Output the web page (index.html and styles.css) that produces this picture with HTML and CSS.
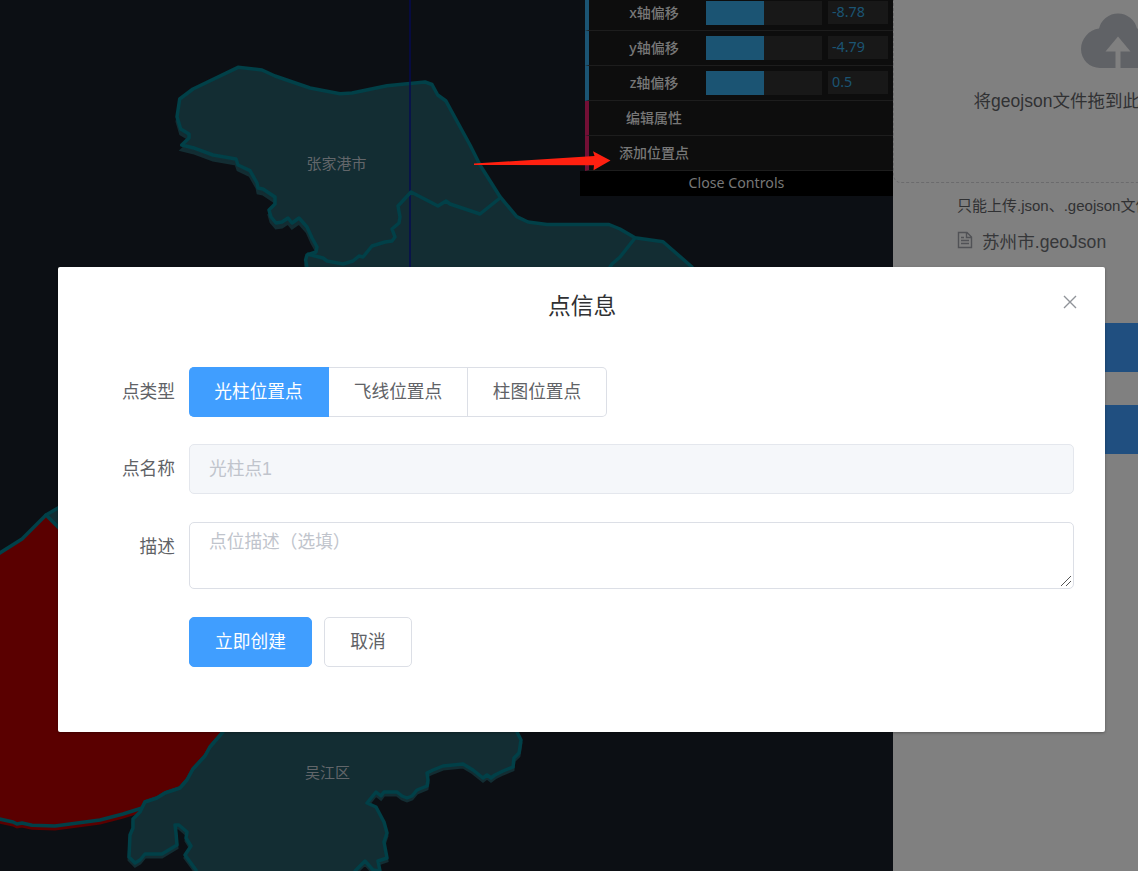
FILE: index.html
```html
<!DOCTYPE html>
<html lang="zh-CN">
<head>
<meta charset="utf-8">
<title>点信息</title>
<link rel="stylesheet" href="styles.css">
</head>
<body>
<div class="app">
  <main class="scene">
    <svg class="map" width="893" height="871" viewBox="0 0 893 871">
      <defs>
        <path id="north" d="M179.7 99L193 89L238 67.3L262 70L275 76L310 88L340 93.7L352 93L387 85.7L425 82L432 84.5L437.7 95L445.7 100.7L470 145L480 165L500 196.7L516.7 216.7L528 222L547 224.5H609L620 229L635 237.7L663 241.7L692 267V300H307V267L305.6 260L307 255L316 252L317 247L312 238L307 227L299 218L292 223L288 218L282 222L276 223L271 217L269 210L275 204V197L263 189L258 188L257 183L250 170.7L238 165L236 159L213 155L193 147.7L181.7 145L189 138V134L180.7 129L177 116.7Z"/>
        <path id="south" d="M223 732L210 747L205 756L193 769L187 780L180 788L165 793L157 798L145 802L140 812L133 819V828L130 835L129 857L135 863L140 860L145 854H162L177 845L176 833L175 825L179 825L187 832L186 838L191 846L185 855L196 870V890H355V871L365 861L373 870L380 871L378 861L387 858L384 842L387 833L384 822L376 807L367 803L376 792L381 796L384 792H397L402 796L407 798L412 796L417 790L427 786L428 780L427 773L433 770L443 766L463 764L473 770L483 778L487 775L491 778L495 775L503 771L513 767L514 758L519 753L521 740L516 730V700H223Z"/>
        <path id="lake" d="M-5 556L22 539L46 515L58 527L90 560V700H240L223 732L210 747L205 756L193 769L187 780L180 788L165 793L157 798L145 802L142 808L123 814L100 820L70 824L55 826L32 825.3L22 823L17 824L13 822L-5 818Z"/>
      </defs>
      <use href="#north" y="5" class="side"/>
      <use href="#lake" y="3" class="lake-side"/>
      <use href="#south" y="3" class="side"/>
      <path class="land" d="M46 515L58 508L80 500V550Z"/>
      <use href="#lake" class="lake"/>
      <use href="#north" class="land"/>
      <use href="#south" class="land"/>
      <path class="axis" d="M410 0V300"/>
      <path class="border" d="M307 254L323 258L327 261L343 264L353 261L359 256L363 257L372 246L385 242L392 241L395 237L392 229L399 223L400 217L398 206L411 192L438 206L446 201L450 204L480 214L500 198M635 238L620 257L612 264L605 275"/>
      <text class="place" x="336.500" y="168.500">张家港市</text>
      <text class="place" x="327.500" y="778">吴江区</text>
    </svg>
    <section class="gui">
      <ul class="gui-list">
        <li class="row num"><span class="name">x轴偏移</span><span class="slider"><i class="fill"></i></span><span class="value">-8.78</span></li>
        <li class="row num"><span class="name">y轴偏移</span><span class="slider"><i class="fill"></i></span><span class="value">-4.79</span></li>
        <li class="row num"><span class="name">z轴偏移</span><span class="slider"><i class="fill"></i></span><span class="value">0.5</span></li>
        <li class="row func"><span class="name">编辑属性</span></li>
        <li class="row func"><span class="name">添加位置点</span></li>
      </ul>
      <div class="gui-close">Close Controls</div>
    </section>
  </main>
  <aside class="sidebar">
    <div class="drop">
      <svg class="cloud" width="74" height="57" viewBox="0 0 74 57">
        <path class="cloud-shape" d="M19 56A19 19 0 0 1 0 37C0 27 8 17.500 18 16.500A19.500 19.500 0 0 1 56 16.500C66 17.500 74 27 74 37A19 19 0 0 1 55 56Z"/>
        <path class="cloud-arrow" d="M37 24.500L49.500 39.500H39.500V57H34.500V39.500H24.500Z"/>
      </svg>
      <div class="drop-text">将geojson文件拖到此处，或点击上传</div>
    </div>
    <div class="tip">只能上传.json、.geojson文件</div>
    <div class="file">
      <svg width="16" height="18" viewBox="0 0 16 18"><path class="doc" d="M1.500 1.500H10L14.500 6V16.500H1.500ZM9.500 1.500V6.500H14.500M4 6.500H7M4 9.500H12M4 12.500H12"/></svg>
      <span>苏州市.geoJson</span>
    </div>
    <div class="side-button"></div>
    <div class="side-button"></div>
  </aside>

  <svg class="pointer" width="138" height="22" viewBox="0 0 138 22"><path d="M0 13.500V15L120 15.200L119.500 20.300L136.500 10.500L119 1.200L120.500 6Z"/></svg>

  <section class="dialog">
    <header class="dialog-head">
      <h1 class="title">点信息</h1>
      <svg class="close" width="14" height="14" viewBox="0 0 14 14"><path d="M1 1L13 13M13 1L1 13"/></svg>
    </header>
    <form class="form">
      <div class="item">
        <label class="label">点类型</label>
        <div class="radios"><span class="radio on">光柱位置点</span><span class="radio">飞线位置点</span><span class="radio">柱图位置点</span></div>
      </div>
      <div class="item">
        <label class="label">点名称</label>
        <div class="input">光柱点1</div>
      </div>
      <div class="item area">
        <label class="label">描述</label>
        <div class="textarea"><span>点位描述（选填）</span>
          <svg class="grip" width="12" height="12" viewBox="0 0 12 12"><path d="M1 11L11 1M6 11L11 6"/></svg>
        </div>
      </div>
      <div class="actions"><button type="button" class="btn primary">立即创建</button><button type="button" class="btn">取消</button></div>
    </form>
  </section>
</div>
</body>
</html>
```
FILE: styles.css
```css
* { box-sizing: border-box; }
body { margin: 0; font-family: "Liberation Sans", "Noto Sans CJK SC", sans-serif; }
.app { position: relative; display: flex; width: 1138px; height: 871px; overflow: hidden; background: #0c0f14; }
.scene { position: relative; flex: 0 0 893px; }
.map { display: block; }
.land { fill: #132d33; stroke: #014048; stroke-width: 3.5; stroke-linejoin: round; }
.side { fill: #132d33; stroke: #132d33; stroke-width: 3; }
.lake { fill: #5a0000; stroke: #014048; stroke-width: 3.5; stroke-linejoin: round; }
.lake-side { fill: #5a0000; stroke: #5a0000; stroke-width: 3; }
.border { fill: none; stroke: #014048; stroke-width: 3.5; stroke-linejoin: round; }
.axis { stroke: #060a52; stroke-opacity: .7; stroke-width: 2; }
.place { fill: #62666a; font-size: 15px; text-anchor: middle; }

/* Parameter panel floats over the map */
.gui { position: absolute; top: 0; right: 0; width: 313px; font-family: "Noto Sans", "Noto Sans CJK SC", sans-serif; font-size: 14px; color: #777; }
.gui-list { margin: -4px 0 0 5px; padding: 0; list-style: none; }
.row { display: flex; align-items: center; height: 35px; padding-right: 5px; border-left: 4px solid #1b5473; border-bottom: 1px solid #1d1d1d; background: #0d0d0d; }
.func { border-left-color: #730f35; }
.name { width: 117px; padding-left: 13px; text-align: center; line-height: 34px; font-weight: 500; white-space: nowrap; }
.slider { width: 116px; height: 24px; background: #181818; }
.fill { display: block; width: 58px; height: 24px; background: #1b5473; }
.value { width: 60px; height: 23px; margin: 0 0 1px 6px; padding-left: 4px; font-size: 14.3px; line-height: 22px; background: #181818; color: #1b5473; }
.gui-close { height: 25px; background: #000; font-size: 14.2px; line-height: 24px; text-align: center; }

.sidebar { flex: 0 0 450px; background: #808080; color: #303133; }
.drop { height: 183px; padding-top: 12px; border: 1px dashed #6b6b6d; border-top: 0; border-radius: 0 0 8px 8px; }
.cloud { display: block; margin: 0 auto; }
.cloud-shape { fill: #606266; }
.cloud-arrow { fill: #808080; }
.drop-text { padding-top: 18px; text-align: center; font-size: 17.5px; line-height: 28px; white-space: nowrap; }
.tip { padding: 12px 0 0 64px; font-size: 15px; line-height: 22px; white-space: nowrap; }
.file { display: flex; align-items: center; gap: 9px; height: 28px; margin: 9px 0 69px 64px; font-size: 17.6px; color: #363739; }
.doc { fill: none; stroke: #515256; stroke-width: 1.4; }
.side-button { height: 49px; margin-bottom: 33px; background: #204f80; }

.pointer { position: absolute; left: 474px; top: 150px; fill: #ff2010; }

.dialog { position: absolute; left: 58px; top: 267px; width: 1047px; height: 465px; border-radius: 2px; background: #fff; box-shadow: 0 1px 3px rgba(0,0,0,.3); color: #606266; font-size: 17.7px; }
.dialog-head { display: flex; align-items: center; height: 100px; padding: 0 28px 22px 490px; }
.title { flex: 1; margin: 0; font-size: 22.8px; font-weight: 400; line-height: 30px; color: #303133; }
.close { margin-bottom: 8px; fill: none; stroke: #909399; stroke-width: 1.4; }
.form { display: flex; flex-direction: column; gap: 28px; padding-right: 31px; }
.item { display: flex; height: 50px; line-height: 50px; }
.item + .item { margin-top: -1px; }
.label { width: 131px; padding-right: 14px; text-align: right; line-height: 50px; }
.radios { display: flex; line-height: 49px; }
.radio { width: 139px; border: 1px solid #dcdfe6; border-left: 0; text-align: center; }
.radio.on { width: 140px; border-color: #409eff; border-radius: 5px 0 0 5px; background: #409eff; color: #fff; }
.radio:last-child { border-radius: 0 5px 5px 0; }
.input { flex: 1; padding-left: 19px; border: 1px solid #e4e7ed; border-radius: 5px; background: #f5f7fa; color: #c0c4cc; line-height: 49px; }
.item.area { height: 67px; margin-top: 0; }
.textarea { position: relative; flex: 1; padding: 6px 19px; border: 1px solid #dcdfe6; border-radius: 5px; line-height: 26px; color: #c0c4cc; }
.grip { position: absolute; right: 1px; bottom: 1px; fill: none; stroke: #555; stroke-width: 1; }
.actions { display: flex; gap: 12px; padding-left: 131px; }
.btn { width: 88px; height: 50px; padding: 0 0 5px; border: 1px solid #dcdfe6; border-radius: 5px; background: #fff; color: #606266; font: inherit; }
.btn.primary { width: 123px; border-color: #409eff; background: #409eff; color: #fff; }
```
